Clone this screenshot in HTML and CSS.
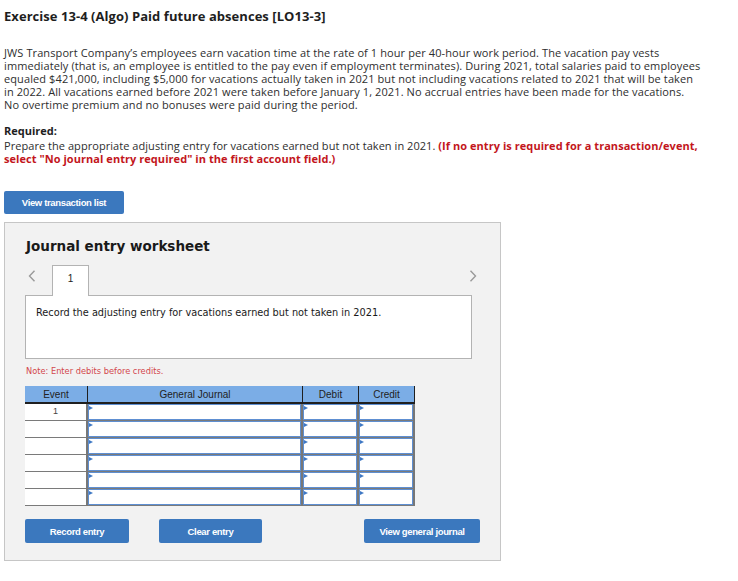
FILE: index.html
```html
<!DOCTYPE html>
<html>
<head>
<meta charset="utf-8">
<link rel="stylesheet" href="styles.css">
</head>
<body>
<div class="page">
  <h1 class="title">Exercise 13-4 (Algo) Paid future absences [LO13-3]</h1>
  <p class="intro">JWS Transport Company’s employees earn vacation time at the rate of 1 hour per 40-hour work period. The vacation pay vests immediately (that is, an employee is entitled to the pay even if employment terminates). During 2021, total salaries paid to employees equaled $421,000, including $5,000 for vacations actually taken in 2021 but not including vacations related to 2021 that will be taken in 2022. All vacations earned before 2021 were taken before January 1, 2021. No accrual entries have been made for the vacations.<br>No overtime premium and no bonuses were paid during the period.</p>
  <div class="required">Required:</div>
  <p class="instr">Prepare the appropriate adjusting entry for vacations earned but not taken in 2021. <strong class="red">(If no entry is required for a transaction/event, select "No journal entry required" in the first account field.)</strong></p>
  <button class="btn btn-list">View transaction list</button>

  <div class="panel">
    <h2 class="ws-title">Journal entry worksheet</h2>
    <div class="tabs">
      <svg class="chev chev-left" width="8" height="12" viewBox="0 0 8 12"><path d="M6.5 0.8 L1.5 6 L6.5 11.2" fill="none" stroke="#9a9a9a" stroke-width="1.4"/></svg>
      <div class="tab">1</div>
      <svg class="chev chev-right" width="8" height="12" viewBox="0 0 8 12"><path d="M1.5 0.8 L6.5 6 L1.5 11.2" fill="none" stroke="#9a9a9a" stroke-width="1.4"/></svg>
    </div>
    <div class="entry-box">Record the adjusting entry for vacations earned but not taken in 2021.</div>
    <div class="note">Note: Enter debits before credits.</div>

    <table class="journal">
      <thead>
        <tr>
          <th class="c-event">Event</th>
          <th class="c-gj">General Journal</th>
          <th class="c-amt">Debit</th>
          <th class="c-amt c-last">Credit</th>
        </tr>
      </thead>
      <tbody>
        <tr><td class="ev">1</td><td class="in"><div class="field"></div></td><td class="in"><div class="field"></div></td><td class="in last"><div class="field"></div></td></tr>
        <tr><td class="ev"></td><td class="in"><div class="field"></div></td><td class="in"><div class="field"></div></td><td class="in last"><div class="field"></div></td></tr>
        <tr><td class="ev"></td><td class="in"><div class="field"></div></td><td class="in"><div class="field"></div></td><td class="in last"><div class="field"></div></td></tr>
        <tr><td class="ev"></td><td class="in"><div class="field"></div></td><td class="in"><div class="field"></div></td><td class="in last"><div class="field"></div></td></tr>
        <tr><td class="ev"></td><td class="in"><div class="field"></div></td><td class="in"><div class="field"></div></td><td class="in last"><div class="field"></div></td></tr>
        <tr><td class="ev"></td><td class="in"><div class="field"></div></td><td class="in"><div class="field"></div></td><td class="in last"><div class="field"></div></td></tr>
      </tbody>
    </table>

    <div class="actions">
      <button class="btn btn-record">Record entry</button>
      <button class="btn btn-clear">Clear entry</button>
      <button class="btn btn-view">View general journal</button>
    </div>
  </div>
</div>
</body>
</html>
```

FILE: styles.css
```css
* { box-sizing: border-box; }

body {
  margin: 0;
  background: #ffffff;
  font-family: "Open Sans", "Liberation Sans", sans-serif;
  color: #2e2e2e;
}

.page {
  padding: 0 4px;
}

.title {
  margin: 8px 0 0;
  font-size: 13px;
  line-height: 16px;
  font-weight: 700;
  letter-spacing: 0.05px;
  color: #1e1e1e;
}

.intro {
  margin: 22px 0 0;
  max-width: 700px;
  font-size: 11px;
  line-height: 13px;
  letter-spacing: 0.1px;
}

.required {
  margin-top: 13px;
  font-size: 11px;
  line-height: 14px;
  font-weight: 700;
  color: #1e1e1e;
}

.instr {
  margin: 1px 0 0;
  max-width: 700px;
  font-size: 11px;
  line-height: 13px;
  letter-spacing: 0.05px;
}

.red {
  color: #c3161c;
  font-weight: 700;
}

.btn {
  display: flex;
  align-items: center;
  justify-content: center;
  border: none;
  border-radius: 2px;
  background: #3b78be;
  color: #ffffff;
  font-family: "Liberation Sans", Arial, sans-serif;
  font-weight: 700;
  font-size: 9.5px;
  letter-spacing: -0.35px;
  padding: 0;
  cursor: pointer;
}

.btn-list {
  margin-top: 26px;
  width: 120px;
  height: 23px;
}

.panel {
  margin-top: 8px;
  width: 497px;
  background: #f2f2f2;
  border: 1px solid #c6c6c6;
  padding: 0 20px 17px;
}

.ws-title {
  margin: 15px 0 0 1px;
  font-family: "DejaVu Sans", Verdana, sans-serif;
  font-size: 13.5px;
  line-height: 16px;
  font-weight: 700;
  color: #1a1a1a;
}

.tabs {
  display: flex;
  align-items: flex-start;
  width: 452px;
  height: 30px;
  margin-top: 11px;
}

.chev {
  display: block;
  margin-top: 5px;
}

.chev-left {
  margin-left: 3px;
}

.tab {
  margin-left: 16px;
  width: 37px;
  height: 31px;
  background: #ffffff;
  border: 1px solid #b3b3b3;
  border-bottom: none;
  position: relative;
  z-index: 1;
  font-family: "Liberation Sans", Arial, sans-serif;
  font-size: 10px;
  color: #222;
  text-align: center;
  padding-top: 7px;
}

.chev-right {
  margin-left: auto;
}

.entry-box {
  width: 447px;
  height: 64px;
  background: #ffffff;
  border: 1px solid #b3b3b3;
  padding: 11px 0 0 10px;
  font-family: "DejaVu Sans", Verdana, sans-serif;
  font-size: 9.75px;
  line-height: 12px;
  color: #1a1a1a;
}

.note {
  margin-top: 7px;
  margin-left: 1px;
  font-family: "DejaVu Sans", Verdana, sans-serif;
  font-size: 8.25px;
  line-height: 10px;
  color: #d2474c;
}

.journal {
  margin-top: 10px;
  border-collapse: separate;
  border-spacing: 0;
  table-layout: fixed;
  width: 390px;
  font-family: "Liberation Sans", Arial, sans-serif;
}

.journal th {
  height: 18px;
  padding: 0;
  background: #7badE6;
  border-right: 1px solid #1f1f1f;
  border-bottom: 2px solid #1f1f1f;
  font-size: 10px;
  font-weight: 400;
  color: #222;
  text-align: center;
}

.c-event { width: 63px; }
.c-gj { width: 215px; }
.c-amt { width: 56px; }

.journal td {
  height: 17px;
  padding: 0;
  background: #ffffff;
  border-bottom: 1px solid #7a7a7a;
  border-right: 2px solid #777777;
  vertical-align: top;
}

.journal td.ev {
  font-size: 9px;
  color: #444;
  text-align: center;
  line-height: 14px;
}

.field {
  position: relative;
  height: 16px;
  border: 1px solid #5e8fd2;
}

.field::before {
  content: "";
  position: absolute;
  left: 0;
  top: 1px;
  border-left: 4px solid #3f78c4;
  border-top: 2px solid transparent;
  border-bottom: 2px solid transparent;
}

.actions {
  display: flex;
  width: 455px;
  margin-top: 13px;
}

.btn-record {
  width: 104px;
  height: 24px;
}

.btn-clear {
  width: 103px;
  height: 24px;
  margin-left: 30px;
}

.btn-view {
  width: 116px;
  height: 24px;
  margin-left: auto;
}
```
